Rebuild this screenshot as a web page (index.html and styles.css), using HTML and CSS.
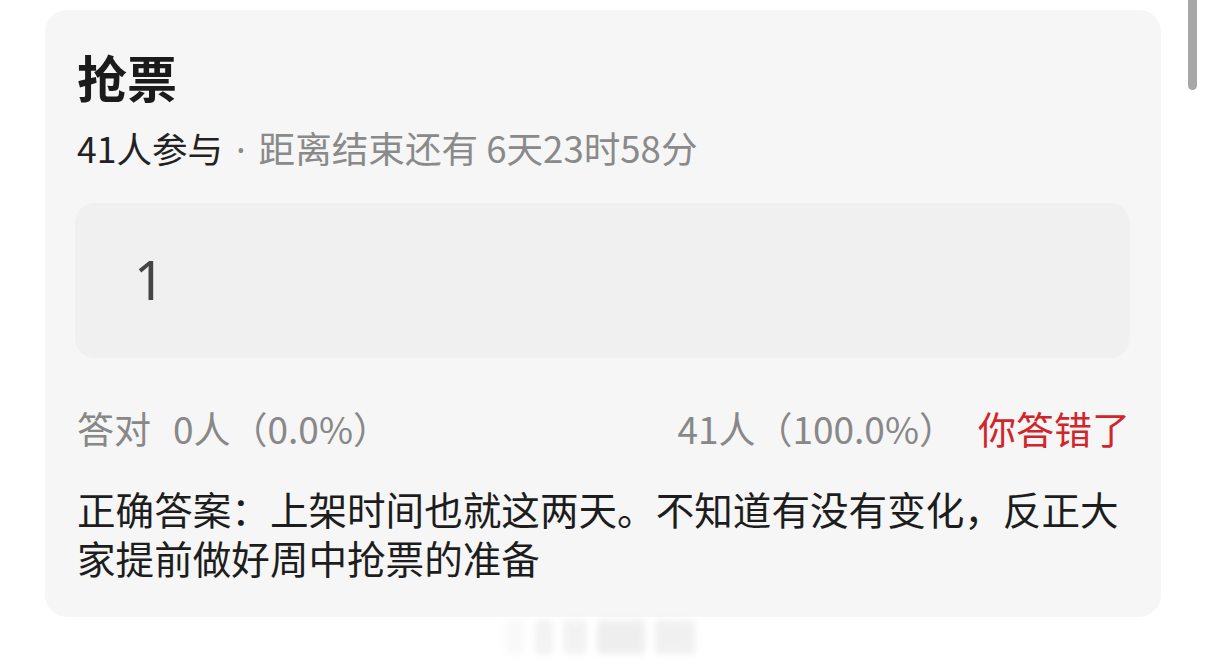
FILE: index.html
```html
<!DOCTYPE html>
<html lang="zh">
<head>
<meta charset="utf-8">
<title>抢票</title>
<link rel="stylesheet" href="styles.css">
</head>
<body>
<div class="card">
  <h1 class="title">抢票</h1>
  <div class="meta"><span class="meta-count">41人参与</span><span class="meta-dot">·</span><span class="meta-rest">距离结束还有 6天23时58分</span></div>
  <div class="option"><span class="option-text">1</span></div>
  <div class="stats">
    <div class="stats-left"><span class="label">答对</span><span>0人（0.0%）</span></div>
    <div class="stats-right"><span>41人（100.0%）</span><span class="wrong">你答错了</span></div>
  </div>
  <p class="answer">正确答案：上架时间也就这两天。不知道有没有变化，反正大家提前做好周中抢票的准备</p>
</div>
<div class="scrollbar"></div>
<div class="watermark">
  <span class="wm wm1"></span><span class="wm wm2"></span><span class="wm wm3"></span><span class="wm wm4"></span><span class="wm wm5"></span>
</div>
</body>
</html>
```

FILE: styles.css
```css
html, body {
  margin: 0;
  padding: 0;
  background: #ffffff;
}
body {
  font-family: "Noto Sans CJK SC", "Noto Sans", sans-serif;
  width: 1206px;
  height: 666px;
  overflow: hidden;
  position: relative;
  padding-top: 10px;
  box-sizing: border-box;
}
.card {
  margin: 0 45px;
  background: #f6f6f6;
  border-radius: 22px;
  padding: 31px 31px 35px 32px;
}
.title {
  margin: 0;
  font-size: 50px;
  line-height: 70px;
  font-weight: 700;
  color: #1b1b1b;
}
.meta {
  margin-top: 11px;
  font-size: 36px;
  line-height: 50px;
  white-space: nowrap;
}
.meta-count {
  font-size: 35.5px;
  color: #222222;
}
.meta-dot {
  font-family: "Noto Sans", sans-serif;
  color: #8a8a8a;
  margin: 0 13px 0 13px;
}
.meta-rest {
  font-size: 36.6px;
  color: #8a8a8a;
}
.option {
  margin-top: 28px;
  margin-left: -2px;
  height: 155px;
  box-sizing: border-box;
  background: #f0f0f0;
  border-radius: 20px;
  display: flex;
  align-items: center;
  padding-left: 59px;
  padding-bottom: 4px;
}
.option-text {
  font-family: "Noto Sans", "Noto Sans CJK SC", sans-serif;
  font-weight: 400;
  font-size: 54px;
  color: #444444;
  line-height: 1;
}
.stats {
  margin-top: 45px;
  display: flex;
  justify-content: space-between;
  font-size: 37px;
  line-height: 50px;
  color: #888888;
  white-space: nowrap;
}
.stats-left .label { margin-right: 22px; }
.stats-right .wrong {
  margin-left: 22px;
  font-size: 38px;
  color: #d0262a;
}
.answer {
  margin: 31px 0 0;
  font-size: 38.6px;
  line-height: 49px;
  color: #1d1d1d;
}
.scrollbar {
  position: absolute;
  top: 0;
  left: 1188px;
  width: 9px;
  height: 90px;
  background: #a7a7a7;
  border-radius: 0 0 5px 5px;
}
.watermark {
  position: absolute;
  top: 620px;
  left: 505px;
  width: 200px;
  height: 36px;
  display: flex;
  gap: 10px;
  filter: blur(3px);
  opacity: 0.3;
}
.wm {
  display: block;
  height: 34px;
  background: #d6d6d6;
  border-radius: 4px;
}
.wm1 { width: 20px; background: #ececec; }
.wm2 { width: 18px; }
.wm3 { width: 24px; }
.wm4 { width: 48px; background: #c8c8c8; }
.wm5 { width: 40px; background: #cfcfcf; }
```
